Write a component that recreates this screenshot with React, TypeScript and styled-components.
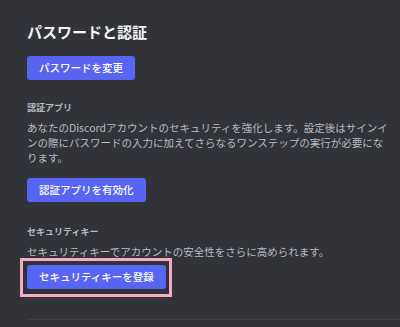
import React from 'react';
import styled, { createGlobalStyle } from 'styled-components';

const GlobalStyle = createGlobalStyle`
  html, body {
    margin: 0;
    padding: 0;
    background: #313338;
  }

  body {
    font-family: "Noto Sans CJK JP", "Noto Sans", sans-serif;
    -webkit-font-smoothing: antialiased;
  }
`;

const Page = styled.div`
  min-height: 327px;
  padding: 22px 11px 0 27px;
  box-sizing: border-box;
  display: flex;
  flex-direction: column;
  align-items: flex-start;
`;

const Title = styled.h1`
  margin: 0 0 14px;
  font-size: 15px;
  line-height: 20px;
  font-weight: 700;
  color: #f2f3f5;
`;

const Label = styled.h2<{ $top: number }>`
  margin: ${(p) => p.$top}px 0 6px;
  font-size: 9px;
  line-height: 12px;
  font-weight: 700;
  color: #b5bac1;
`;

const Description = styled.p`
  margin: 0;
  width: 362px;
  font-size: 10.5px;
  line-height: 15px;
  color: #b5bac1;
`;

const Button = styled.button<{ $top?: number; $highlight?: boolean }>`
  position: relative;
  margin-top: ${(p) => p.$top ?? 0}px;
  height: 24px;
  padding: 0 12px;
  border: none;
  border-radius: 3px;
  background: #5865f2;
  color: #ffffff;
  font-family: inherit;
  font-size: 10.5px;
  font-weight: 500;
  line-height: 24px;
  cursor: pointer;

  &:hover {
    background: #4752c4;
  }

  /* pink annotation frame drawn over the button */
  &::after {
    content: '';
    display: ${(p) => (p.$highlight ? 'block' : 'none')};
    position: absolute;
    inset: -7px -6px -8px -7px;
    border: 3px solid #f5a9c5;
    pointer-events: none;
  }
`;

const Divider = styled.hr`
  align-self: stretch;
  margin: 30px -11px 0 0;
  border: none;
  border-top: 1px solid #3f4147;
`;

const App = () => {
    return (
        <>
            <GlobalStyle />
            <Page>
                <Title>パスワードと認証</Title>
                <Button>パスワードを変更</Button>

                <Label $top={22}>認証アプリ</Label>
                <Description>
                    あなたのDiscordアカウントのセキュリティを強化します。設定後はサインインの際にパスワードの入力に加えてさらなるワンステップの実行が必要になります。
                </Description>
                <Button $top={13}>認証アプリを有効化</Button>

                <Label $top={24}>セキュリティキー</Label>
                <Description>セキュリティキーでアカウントの安全性をさらに高められます。</Description>
                <Button $top={6} $highlight>セキュリティキーを登録</Button>

                <Divider />
            </Page>
        </>
    );
};

export default App;
